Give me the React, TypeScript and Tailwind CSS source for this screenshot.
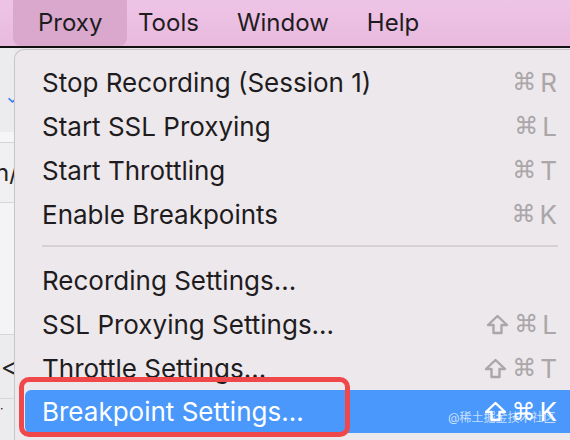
const font = { fontFamily: 'Inter, "Liberation Sans", "Noto Sans CJK SC", sans-serif' }

type Item = { label: string; keys: string; shift?: boolean }

const groupA: Item[] = [
  { label: 'Stop Recording (Session 1)', keys: 'R' },
  { label: 'Start SSL Proxying', keys: 'L' },
  { label: 'Start Throttling', keys: 'T' },
  { label: 'Enable Breakpoints', keys: 'K' },
]

const groupB: Item[] = [
  { label: 'Recording Settings...', keys: '' },
  { label: 'SSL Proxying Settings...', keys: 'L', shift: true },
  { label: 'Throttle Settings...', keys: 'T', shift: true },
]

function Shortcut({ k, shift, active }: { k: string; shift?: boolean; active?: boolean }) {
  if (!k) return null
  return (
    <span className={`flex items-center gap-[4px] ${active ? 'text-white' : 'text-[#aaa6a9]'}`}>
      {shift && (
        <svg width="23" height="21" viewBox="0 0 23 21" className="mr-[1px]">
          <path
            d="M11.5 2 L21 11 H15.5 V19 H7.5 V11 H2 Z"
            fill="none"
            stroke="currentColor"
            strokeWidth="2.4"
            strokeLinejoin="round"
          />
        </svg>
      )}
      <span className="text-[24px]" style={{ fontFamily: '"DejaVu Sans", sans-serif' }}>⌘</span>
      <span>{k}</span>
    </span>
  )
}

function Row({ item }: { item: Item }) {
  return (
    <div className="h-[44px] flex items-center justify-between pl-[27px] pr-[13px]">
      <span>{item.label}</span>
      <Shortcut k={item.keys} shift={item.shift} />
    </div>
  )
}

export default function App() {
  return (
    <div className="w-[570px] h-[440px] overflow-hidden bg-[#e9e8ea] flex flex-col text-[#1e1c1e]" style={font}>
      {/* menu bar */}
      <div className="h-[48px] shrink-0 bg-gradient-to-b from-[#eec4e6] to-[#e8bade] flex items-stretch pl-[13px] text-[24px] border-b-2 border-[#111]">
        <div className="w-[114px] bg-[#d9a8cc] rounded-b-[8px] flex items-center pl-[25px]">Proxy</div>
        <div className="flex items-center pl-[11px]">Tools</div>
        <div className="flex items-center pl-[38px]">Window</div>
        <div className="flex items-center pl-[38px]">Help</div>
      </div>

      <div className="flex flex-1 min-h-0">
        {/* app behind the menu */}
        <div className="w-[14px] shrink-0 flex flex-col text-[24px] text-[#222] bg-[#ececee]">
          <div className="h-[40px]" />
          <div className="h-[44px] text-[#2d7cf6] text-[18px] pl-[6px] leading-[22px] overflow-hidden">✓</div>
          <div className="h-[10px] bg-[#f5f5f7]" />
          <div className="h-[60px] border-t border-[#d6d6d8] bg-[#f0f0f2] flex items-center overflow-hidden">
            <span className="-ml-[5px]">n/</span>
          </div>
          <div className="h-[132px] border-t border-[#d6d6d8] bg-[#f4f4f6]" />
          <div className="h-[64px] border-t border-[#d6d6d8] flex items-center overflow-hidden">
            <span className="ml-[1px]">&lt;</span>
          </div>
          <div className="flex-1 border-t border-[#d6d6d8] text-[12px] leading-[12px] pt-[4px]">·</div>
        </div>

        {/* dropdown menu */}
        <div className="relative flex-1 mt-[1px] bg-[#ede8eb] rounded-tl-[10px] border-l border-t border-[#c9c4c8] text-[26px] pt-[10px]">
          {groupA.map((it) => (
            <Row key={it.label} item={it} />
          ))}
          <div className="h-[22px] flex flex-col pl-[27px] pr-[12px] pt-[9px]">
            <div className="h-[2px] bg-[#d7d1d5]" />
          </div>
          {groupB.map((it) => (
            <Row key={it.label} item={it} />
          ))}
          <div className="ml-[10px] h-[43px] bg-[#4a98fb] rounded-l-[6px] flex items-center justify-between pl-[17px] pr-[13px] text-white">
            <span>Breakpoint Settings...</span>
            <Shortcut k="K" shift active />
          </div>

          {/* annotation box */}
          <div className="absolute left-[4px] top-[327px] w-[331px] h-[60px] border-[5px] border-[#f0484a] rounded-[10px]" />
          {/* watermark */}
          <div className="absolute left-[433px] top-[359px] text-[12px] text-white/70 whitespace-nowrap">
            @稀土掘金技术社区
          </div>
        </div>
      </div>
    </div>
  )
}
